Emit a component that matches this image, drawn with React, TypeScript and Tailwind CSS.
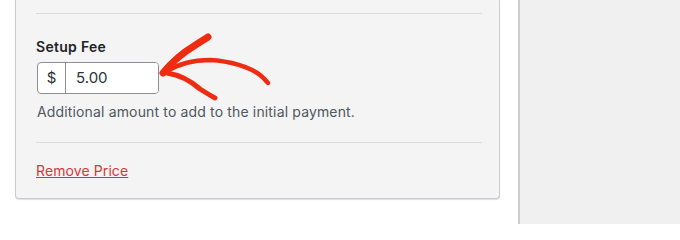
import { useState } from "react";

// Hand-drawn red arrow pointing at the setup fee input
const Arrow = () => (
  <svg
    width="130"
    height="80"
    viewBox="0 0 130 80"
    className="pointer-events-none absolute left-[150px] top-[28px]"
    fill="none"
    stroke="#ef2b12"
    strokeLinecap="round"
    strokeLinejoin="round"
  >
    {/* upper arm */}
    <path d="M13 45 C 22 34, 34 24, 44 18 C 50 14, 55 11, 58 9" strokeWidth="7" />
    {/* shaft */}
    <path d="M16 44 C 28 36, 42 32, 60 32 C 80 33, 100 39, 110 47 C 115 51, 117 54, 118 55" strokeWidth="4.5" />
    {/* lower arm */}
    <path d="M17 45 C 30 47, 42 54, 50 61 C 58 66, 63 69, 65 70" strokeWidth="5" />
  </svg>
);

const App = () => {
  const [fee, setFee] = useState("5.00");

  return (
    <div className="flex h-[224px] w-[680px] overflow-hidden bg-white font-['Inter','Liberation_Sans',sans-serif]">
      <div className="relative pl-[15px]">
        <div className="w-[485px] rounded-b-[4px] border border-t-0 border-[#c8cbd0] bg-[#f4f4f4] pb-[16px] pl-[20px] pr-[17px] pt-[13px] shadow-[0_1px_1px_rgba(0,0,0,0.12)]">
          <hr className="border-0 border-t border-[#dcdcde]" />

          <label
            htmlFor="setup-fee"
            className="mt-[23px] block text-[14px] font-semibold leading-[20px] tracking-[0.3px] text-[#1d2327]"
          >
            Setup Fee
          </label>
          <div className="ml-[1px] mt-[5px] flex h-[32px] w-[122px] overflow-hidden rounded-[4px] border border-[#8c8f94] bg-white">
            <span className="flex w-[28px] shrink-0 items-center justify-center border-r border-[#8c8f94] text-[15px] text-[#2c3338]">
              $
            </span>
            <input
              id="setup-fee"
              value={fee}
              onChange={(e) => setFee(e.target.value)}
              className="w-full min-w-0 bg-white pl-[10px] text-[15px] text-[#2c3338] outline-none"
            />
          </div>
          <p className="ml-[1px] mt-[8px] text-[14px] leading-[20px] tracking-[0.15px] text-[#50575e]">
            Additional amount to add to the initial payment.
          </p>

          <hr className="mt-[20px] border-0 border-t border-[#dcdcde]" />

          <a
            href="#"
            className="mt-[18px] inline-block text-[14px] leading-[20px] tracking-[0.1px] text-[#d63638] underline"
          >
            Remove Price
          </a>
        </div>
        <Arrow />
      </div>

      <div className="ml-[18px] flex-1 border-l-2 border-[#cdcdcd] bg-[#f0f0f0]" />
    </div>
  );
};

export default App;
